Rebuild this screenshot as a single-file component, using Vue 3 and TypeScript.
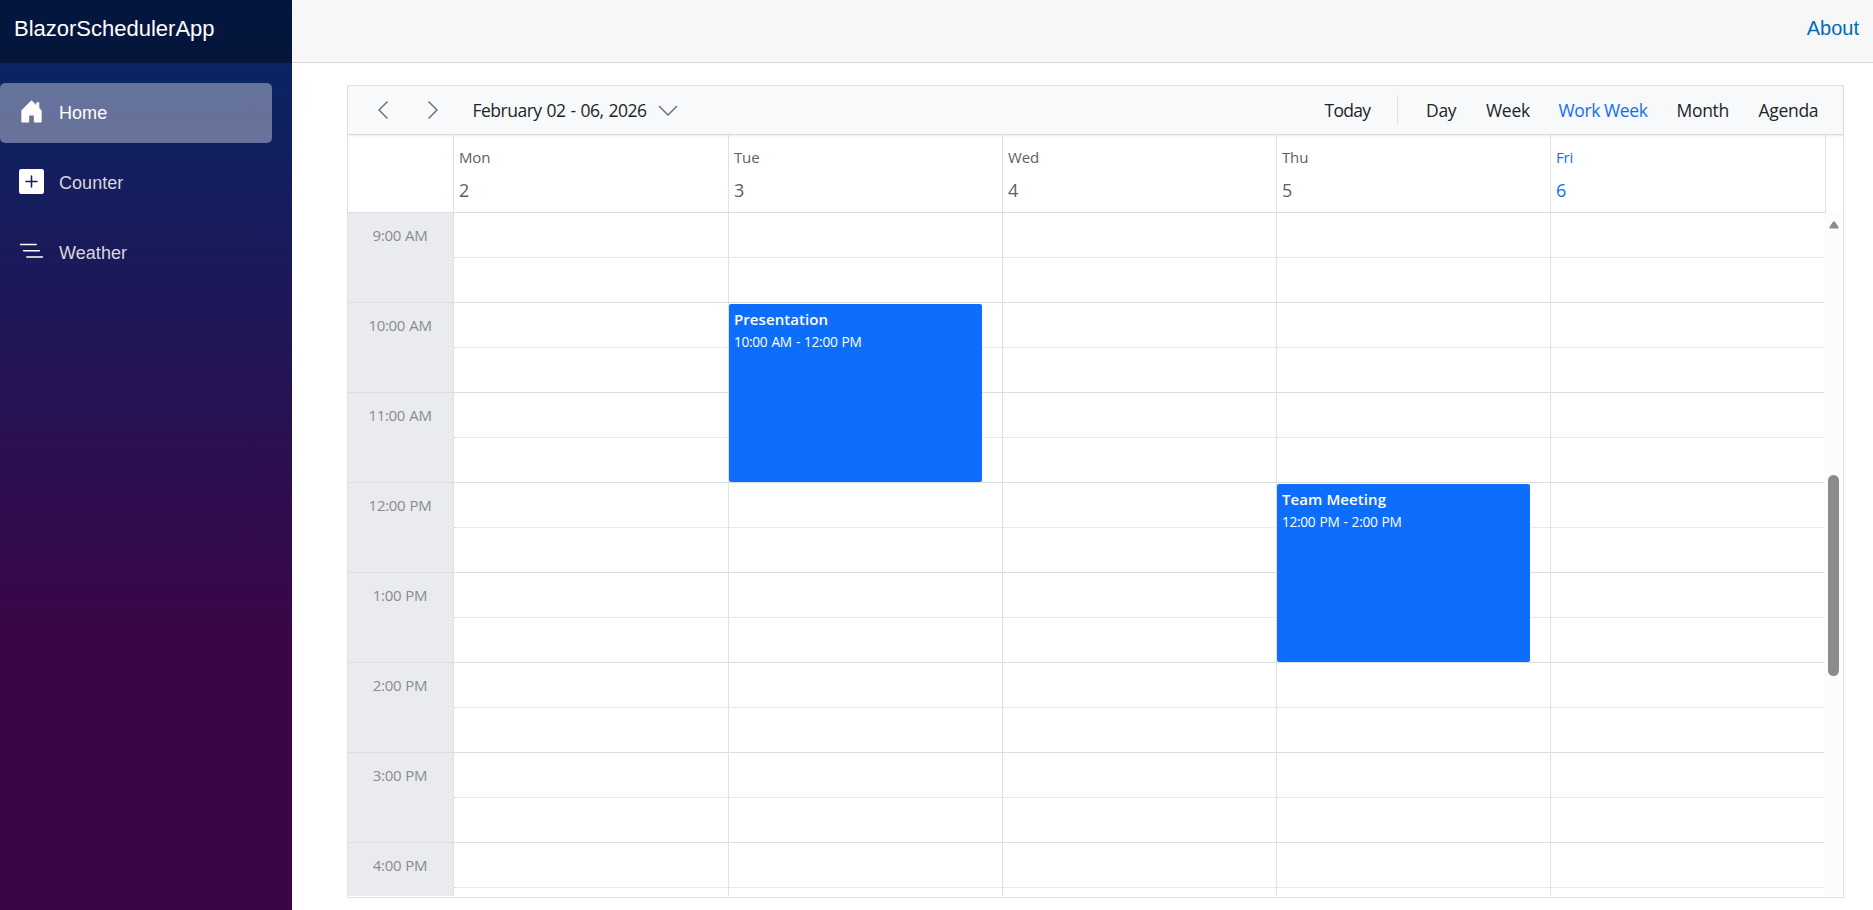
<script setup lang="ts">
interface ViewItem { key: string; label: string }
interface CalendarEvent { title: string; time: string; start: number; hours: number }
interface Day { name: string; date: number; today?: boolean; events: CalendarEvent[] }

const HOUR_HEIGHT = 90
const FIRST_HOUR = 9

const views: ViewItem[] = [
  { key: 'day', label: 'Day' },
  { key: 'week', label: 'Week' },
  { key: 'work-week', label: 'Work Week' },
  { key: 'month', label: 'Month' },
  { key: 'agenda', label: 'Agenda' },
]
const activeView = 'work-week'

const days: Day[] = [
  { name: 'Mon', date: 2, events: [] },
  { name: 'Tue', date: 3, events: [{ title: 'Presentation', time: '10:00 AM - 12:00 PM', start: 10, hours: 2 }] },
  { name: 'Wed', date: 4, events: [] },
  { name: 'Thu', date: 5, events: [{ title: 'Team Meeting', time: '12:00 PM - 2:00 PM', start: 12, hours: 2 }] },
  { name: 'Fri', date: 6, today: true, events: [] },
]

const hours = ['9:00 AM', '10:00 AM', '11:00 AM', '12:00 PM', '1:00 PM', '2:00 PM', '3:00 PM', '4:00 PM']

function eventStyle(e: CalendarEvent) {
  return {
    top: `${(e.start - FIRST_HOUR) * HOUR_HEIGHT + 1}px`,
    height: `${e.hours * HOUR_HEIGHT - 2}px`,
  }
}
</script>

<template>
  <div class="page">
    <aside class="sidebar">
      <div class="brand">BlazorSchedulerApp</div>
      <nav class="nav">
        <a class="nav-item active">
          <svg class="nav-icon" viewBox="0 0 16 16"><path d="M6.5 14.5v-3.505c0-.245.25-.495.5-.495h2c.25 0 .5.25.5.5v3.5a.5.5 0 0 0 .5.5h4a.5.5 0 0 0 .5-.5v-7a.5.5 0 0 0-.146-.354L13 5.793V2.5a.5.5 0 0 0-.5-.5h-1a.5.5 0 0 0-.5.5v1.293L8.354 1.146a.5.5 0 0 0-.708 0l-6 6A.5.5 0 0 0 1.5 7.5v7a.5.5 0 0 0 .5.5h4a.5.5 0 0 0 .5-.5Z" /></svg>
          <span>Home</span>
        </a>
        <a class="nav-item">
          <svg class="nav-icon" viewBox="0 0 16 16"><path d="M1.4 0h13.2A1.4 1.4 0 0 1 16 1.4v13.2a1.4 1.4 0 0 1-1.4 1.4H1.4A1.4 1.4 0 0 1 0 14.6V1.4A1.4 1.4 0 0 1 1.4 0zm7.1 4.5a.5.5 0 0 0-1 0v3h-3a.5.5 0 0 0 0 1h3v3a.5.5 0 0 0 1 0v-3h3a.5.5 0 0 0 0-1h-3v-3z" /></svg>
          <span>Counter</span>
        </a>
        <a class="nav-item">
          <svg class="nav-icon" viewBox="0 0 16 16"><path d="M4.5 11.5A.5.5 0 0 1 5 11h10a.5.5 0 0 1 0 1H5a.5.5 0 0 1-.5-.5zm-2-4A.5.5 0 0 1 3 7h10a.5.5 0 0 1 0 1H3a.5.5 0 0 1-.5-.5zm-2-4A.5.5 0 0 1 1 3h10a.5.5 0 0 1 0 1H1a.5.5 0 0 1-.5-.5z" /></svg>
          <span>Weather</span>
        </a>
      </nav>
    </aside>

    <main class="main">
      <header class="topbar"><a class="about">About</a></header>

      <section class="scheduler">
        <div class="toolbar">
          <svg class="arrow prev" viewBox="0 0 12 20"><path d="M10.5 1.5 2 10l8.500 8.500" /></svg>
          <svg class="arrow next" viewBox="0 0 12 20"><path d="M1.500 1.500 10 10l-8.500 8.500" /></svg>
          <span class="range">February 02 - 06, 2026</span>
          <svg class="chevron" viewBox="0 0 20 11"><path d="M1 1l9 9 9-9" /></svg>
          <span class="today">Today</span>
          <span class="divider"></span>
          <span v-for="v in views" :key="v.key" class="view" :class="[v.key, { active: v.key === activeView }]">{{ v.label }}</span>
        </div>

        <div class="day-header">
          <div class="corner"></div>
          <div v-for="d in days" :key="d.date" class="day-cell" :class="{ current: d.today }">
            <div class="day-name">{{ d.name }}</div>
            <div class="day-date">{{ d.date }}</div>
          </div>
        </div>

        <div class="body">
          <div class="hours">
            <div v-for="h in hours" :key="h" class="hour">{{ h }}</div>
          </div>
          <div v-for="d in days" :key="d.date" class="column">
            <div v-for="h in hours" :key="h" class="slot"><div class="half"></div></div>
            <article v-for="e in d.events" :key="e.title" class="event" :style="eventStyle(e)">
              <div class="event-title">{{ e.title }}</div>
              <div class="event-time">{{ e.time }}</div>
            </article>
          </div>
          <div class="scrollbar">
            <svg class="tip" viewBox="0 0 10 8"><path d="M4 .8Q5-.2 6 .8L9.500 6Q9.800 7.500 9 7.500H1Q.2 7.500.5 6z" /></svg>
            <div class="thumb"></div>
            <svg class="tip down" viewBox="0 0 10 8"><path d="M4 .8Q5-.2 6 .8L9.500 6Q9.800 7.500 9 7.500H1Q.2 7.500.5 6z" /></svg>
          </div>
        </div>
      </section>
    </main>
  </div>
</template>

<style>
body { margin: 0; background: #fff; overflow: hidden; }
</style>

<style scoped>
* { box-sizing: border-box; }
.page {
  display: flex;
  height: 910px;
  overflow: hidden;
  font-family: "Open Sans", "Noto Sans", sans-serif;
}

.sidebar {
  width: 292px;
  flex: none;
  background: linear-gradient(180deg, rgb(5, 39, 103) 0%, #3a0647 70%);
  font-family: "Liberation Sans", Arial, sans-serif;
}
.brand {
  height: 63px;
  padding-left: 14px;
  background: rgba(0, 0, 0, 0.4);
  color: #fff;
  font-size: 22px;
  line-height: 57px;
}
.nav { display: flex; flex-direction: column; gap: 10px; padding: 20px 20px 0 0; }
.nav-item {
  display: flex;
  align-items: center;
  height: 60px;
  padding-left: 19px;
  border-radius: 5px;
  color: #d7d7d7;
  font-size: 18px;
  letter-spacing: 0.05px;
  line-height: 60px;
}
.nav-item.active { background: rgba(255, 255, 255, 0.37); color: #fff; }
.nav-icon { width: 25px; height: 25px; margin: 0 15px 3px 0; fill: #fff; }

.main { flex: 1; min-width: 0; }
.topbar {
  display: flex;
  justify-content: flex-end;
  height: 63px;
  padding-right: 14px;
  border-bottom: 1px solid #d6d5d5;
  background: #f7f7f7;
}
.about { color: #006bb7; font: 20px/56px "Liberation Sans", Arial, sans-serif; }

.scheduler {
  display: flex;
  flex-direction: column;
  width: 1497px;
  height: 813px;
  margin: 22px 0 0 55px;
  border: 1px solid #dee2e6;
}
.toolbar {
  position: relative;
  display: flex;
  align-items: center;
  flex: none;
  height: 49px;
  padding-left: 29px;
  border-bottom: 1px solid #d9dde0;
  background: #f8f9fa;
  box-shadow: 0 1px 2px rgba(0, 0, 0, 0.08);
  color: #212529;
  font-size: 17.5px;
  line-height: 48px;
  white-space: nowrap;
}
.arrow, .chevron { flex: none; fill: none; stroke: #6c757d; stroke-width: 1.5; }
.arrow { width: 12px; height: 20px; }
.next { margin-left: 38px; }
.chevron { width: 20px; height: 11px; margin: 1px auto 0 11px; }
.range { width: 174px; margin-left: 33.5px; letter-spacing: -0.5px; word-spacing: 0.9px; }
.today { width: 72.5px; letter-spacing: -0.7px; }
.divider { width: 1px; height: 30px; margin-right: 28px; background: #dee2e6; }
.view { flex: none; letter-spacing: -0.3px; }
.view.active { letter-spacing: -0.4px; color: #0d6efd; }
.day { width: 60px; }
.week { width: 72.5px; }
.work-week { width: 118px; }
.month { width: 82px; }
.agenda { width: 84.5px; }

.day-header, .body { display: grid; grid-template-columns: 106px 275px repeat(3, 274px) 273px 19px; }
.day-header { flex: none; height: 78px; }
.corner, .day-cell { border-right: 1px solid #dee2e6; border-bottom: 1px solid #dcdfe2; }
.day-cell { padding: 10px 0 0 5px; color: #5c5f63; }
.day-cell:last-child { margin-right: -2px; }
.day-cell.current { color: #0d6efd; }
.day-name { font-size: 15px; line-height: 24px; letter-spacing: -0.15px; }
.day-date { margin-top: 9px; font-size: 18px; line-height: 24px; }

.body { height: 683px; overflow: hidden; }
.hours { border-right: 1px solid #dee2e6; background: #e9ebee; }
.hour {
  height: 90px;
  padding: 10px 1px 0 0;
  border-bottom: 1px solid #dcdfe2;
  color: #898c90;
  font-size: 15px;
  line-height: 24px;
  letter-spacing: -0.3px;
  word-spacing: 0.5px;
  text-align: center;
}
.column { position: relative; border-right: 1px solid #dee2e6; }
.column:nth-last-child(2) { border-right: 0; }
.slot { height: 90px; border-bottom: 1px solid #dcdfe2; }
.half { height: 45px; border-bottom: 1px dotted #d5d9dc; }
.event {
  position: absolute;
  left: 0;
  width: 253px;
  padding: 4px 0 0 5px;
  border-radius: 2px;
  background: #0d6efd;
  color: #fff;
  white-space: nowrap;
}
.event-title { font-size: 15px; font-weight: 600; line-height: 22px; letter-spacing: 0.08px; }
.event-time { margin-top: 1px; font-size: 13.7px; line-height: 22px; letter-spacing: -0.3px; word-spacing: 0.8px; }

.scrollbar { display: flex; flex-direction: column; background: #fcfcfc; padding: 8px 0 7px 4px; }
.tip { width: 10px; height: 8px; margin-left: 0.5px; fill: #8a8a8a; }
.tip.down { transform: rotate(180deg); margin-top: auto; }
.thumb { width: 11px; height: 201px; margin-top: 246px; border-radius: 6px; background: #8b8b8b; }
</style>
